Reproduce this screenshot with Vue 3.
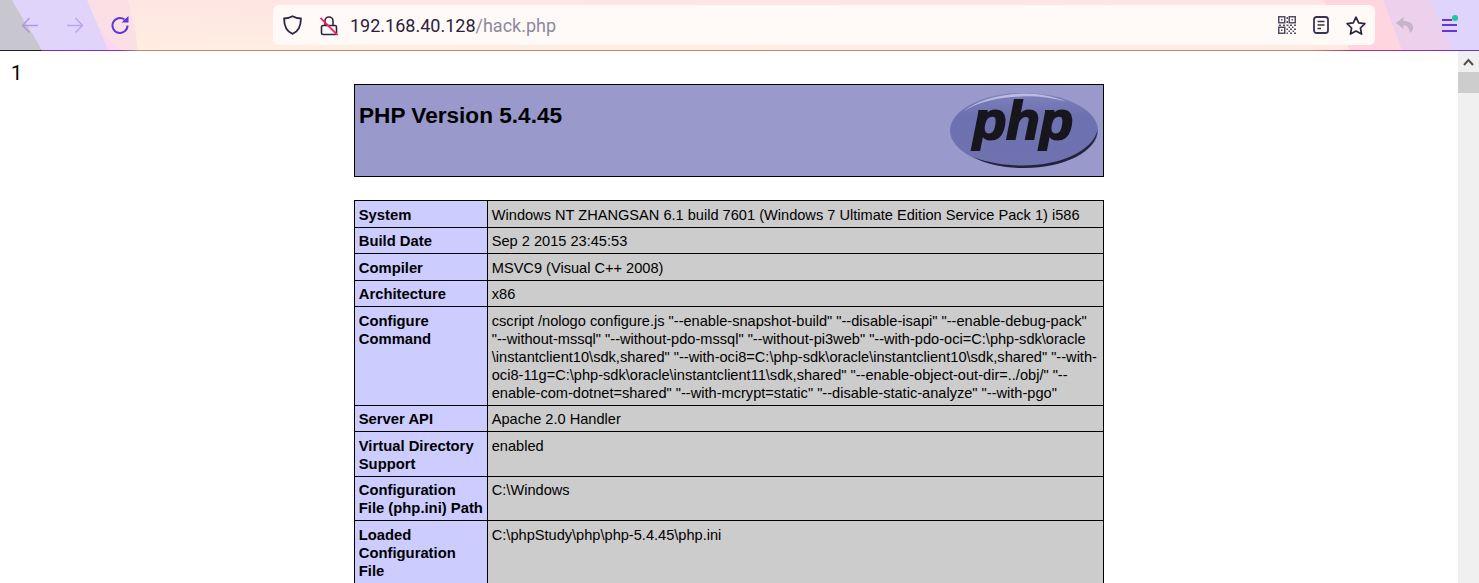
<template>
  <div class="browser">
    <header class="toolbar">
      <svg class="toolbar-bg" width="1479" height="50" viewBox="0 0 1479 50" preserveAspectRatio="none">
        <defs>
          <linearGradient id="barBase" x1="0" y1="1" x2="1" y2="0">
            <stop offset="0" stop-color="#ffefe2" />
            <stop offset="1" stop-color="#ffe6e2" />
          </linearGradient>
          <linearGradient id="barTint" x1="0" y1="0" x2="0" y2="1">
            <stop offset="0" stop-color="#ffdfe6" stop-opacity="0.4" />
            <stop offset="1" stop-color="#ffdfe6" stop-opacity="0" />
          </linearGradient>
        </defs>
        <rect width="1479" height="50" fill="url(#barBase)" />
        <rect x="130" width="1220" height="50" fill="url(#barTint)" />
        <path d="M1323 0H1479V50H1350Z" fill="#ffd6e0" />
        <path d="M0 0H128C132 15 136 32 138 50H0Z" fill="#fadfe4" />
        <path d="M0 0H87C92 15 100 32 120 50H42C32 32 20 15 12 0Z" fill="#fdd6f0" />
        <path d="M0 0H87L108 50H42C32 32 20 15 12 0Z" fill="#e0d4fb" />
        <path d="M0 0H12C20 15 32 32 42 50H0Z" fill="#c8c6ce" />
        <path d="M1383 0H1479V50H1402Z" fill="#ecd0ec" />
        <path d="M1430 0H1479V50H1452Z" fill="#dfd4fb" />
      </svg>
      <div class="nav-buttons">
        <svg class="icon" viewBox="0 0 18 18" fill="none" stroke="#ab9ae2" stroke-width="1.500"><path d="M17 9.500H1.500M8.500 2l-7 7.500 7 7" /></svg>
        <svg class="icon" viewBox="0 0 18 18" fill="none" stroke="#b7a6ea" stroke-width="1.500"><path d="M1 9.500h15.500M9.500 2l7 7.500-7 7" /></svg>
        <svg class="icon" viewBox="0 0 18 18" fill="none" stroke="#5f38d4" stroke-width="2"><path d="M16.500 9.500a7.500 7.500 0 1 1-3-6" /><path d="M10.500 6.500H17.500V0z" fill="#5f38d4" stroke="none" /></svg>
      </div>
      <div class="address-bar">
        <svg class="shield" width="19" height="20" viewBox="0 0 19 20" fill="none" stroke="#2d2640" stroke-width="1.800"><path d="M9.500 1.200c2.800 1.500 5.200 2.100 8.400 2.300 0 7.800-2 12.800-8.400 15.400C3.100 16.300 1.100 11.300 1.100 3.500c3.200-.2 5.600-.8 8.400-2.300z" /></svg>
        <svg class="lock" width="18" height="21" viewBox="0 0 18 21" fill="none" stroke="#2d2640" stroke-width="1.600">
          <path d="M3 10.500h12a1.500 1.500 0 0 1 1.500 1.500v6a1.500 1.500 0 0 1-1.500 1.500H3A1.500 1.500 0 0 1 1.500 18v-6A1.500 1.500 0 0 1 3 10.500z" />
          <path d="M5 10.500V6a4 4 0 0 1 8 0v4.500" />
          <path d="M0.500 3l17 17" stroke="#f0245c" stroke-width="1.800" />
        </svg>
        <span class="url">192.168.40.128<span class="url-path">/hack.php</span></span>
        <div class="address-actions">
          <svg class="qr" width="18" height="18" viewBox="0 0 18 18" fill="#544d6a">
            <path fill-rule="evenodd" d="M0 0h7.500v7.500H0zM1.500 1.500v4.500h4.500v-4.500zM10.500 0h7.500v7.500h-7.500zM12 1.500v4.500h4.500v-4.500zM0 10.500h7.500v7.500H0zM1.500 12v4.500h4.500v-4.500z" />
            <path d="M3 3h1.500v1.500H3zM13.500 3h1.500v1.500h-1.500zM3 13.500h1.500v1.500H3zM8.500 1h1.500v2H8.500zM8.500 5h1.500v2H8.500zM8.500 8.500h2v1.500h-2zM1 8.500h2v1.500H1zM5 8.500h2v1.500H5zM12 8.500h2v1.500h-2zM16 8.500h2v1.500h-2zM10.500 10.500h1.500v1.500h-1.500zM14 10.500h1.500v1.500H14zM8.500 12.500h1.500v1.500H8.500zM12 12.500h2v1.500h-2zM16 12.500h2v1.500h-2zM10.500 14.500h1.500v1.500h-1.500zM14.500 14.500h1.500v1.500h-1.500zM8.500 16.500h1.500v1.500H8.500zM12 16.500h2v1.500h-2zM16 16.500h2v1.500h-2z" />
          </svg>
          <svg class="reader" width="16" height="18" viewBox="0 0 16 18" fill="none" stroke="#3a3350" stroke-width="1.800"><rect x="1" y="1" width="14" height="16" rx="2.500" /><path d="M4.500 5.500h7M4.500 9h7M4.500 12.500h3.500" stroke-width="1.500" /></svg>
          <svg class="star" width="20" height="19" viewBox="0 0 20 19" fill="none" stroke="#2d2640" stroke-width="1.700" stroke-linejoin="round"><path d="M10 1.200l2.700 5.700 6.200.8-4.500 4.300 1.200 6.100-5.600-3-5.600 3 1.200-6.100L1.100 7.700l6.200-.8z" /></svg>
        </div>
      </div>
      <div class="toolbar-end">
        <svg class="undo" width="17" height="16" viewBox="0 0 17 16" fill="#c6b5c9"><path d="M7.500 0L0 6l7.500 6V8.500c3.500 0 5.500 1.500 6.500 7.500 2.500-2 3-3.500 3-5.500C17 6.500 13.500 4 7.500 4z" /></svg>
        <div class="menu-button">
          <span class="menu-line short"></span>
          <span class="menu-line"></span>
          <span class="menu-line"></span>
          <span class="menu-dot"></span>
        </div>
      </div>
    </header>

    <div class="viewport">
      <main class="page">
        <div class="echo">1</div>
        <div class="phpinfo-head">
          <h1>PHP Version 5.4.45</h1>
          <svg class="php-logo" width="150" height="80" viewBox="0 0 150 80">
            <defs>
              <linearGradient id="ovalFill" x1="0" y1="0" x2="0" y2="1">
                <stop offset="0" stop-color="#7e80ba" />
                <stop offset="0.3" stop-color="#6e71b0" />
                <stop offset="1" stop-color="#6f72b0" />
              </linearGradient>
              <filter id="soft" x="-5%" y="-5%" width="110%" height="110%">
                <feGaussianBlur stdDeviation="0.45" />
              </filter>
            </defs>
            <g filter="url(#soft)">
              <ellipse cx="75" cy="38.500" rx="74" ry="37.500" fill="url(#ovalFill)" />
              <path d="M14 20C28 8 50 2 75 1.500c16 0 30 3 42 8C100 5 85 3.500 72 4.500 48 5.500 28 10 14 20z" fill="#b9bbe0" />
              <path d="M148.500 38c0 21-33 38-73.500 38-20 0-38-4-51-11 16 6 32 8.500 50 8.500 38 0 70-15 74.500-35.500z" fill="#23233a" />
              <text class="php-logo-text" x="24" y="47" textLength="100" lengthAdjust="spacingAndGlyphs">php</text>
            </g>
          </svg>
        </div>
        <table class="phpinfo-table">
          <tbody>
            <tr v-for="row in rows" :key="row.label">
              <td class="label">{{ row.label }}</td>
              <td class="value">{{ row.value }}</td>
            </tr>
          </tbody>
        </table>
      </main>
      <div class="scrollbar">
        <div class="scroll-up">
          <svg width="11" height="8" viewBox="0 0 11 8" fill="none" stroke="#505050" stroke-width="2"><path d="M1 7l4.500-5 4.500 5" /></svg>
        </div>
        <div class="scroll-thumb"></div>
      </div>
    </div>
  </div>
</template>

<script setup>
const rows = [
  { label: 'System', value: 'Windows NT ZHANGSAN 6.1 build 7601 (Windows 7 Ultimate Edition Service Pack 1) i586' },
  { label: 'Build Date', value: 'Sep 2 2015 23:45:53' },
  { label: 'Compiler', value: 'MSVC9 (Visual C++ 2008)' },
  { label: 'Architecture', value: 'x86' },
  {
    label: 'Configure\nCommand',
    value: 'cscript /nologo configure.js "--enable-snapshot-build" "--disable-isapi" "--enable-debug-pack"\n"--without-mssql" "--without-pdo-mssql" "--without-pi3web" "--with-pdo-oci=C:\\php-sdk\\oracle\n\\instantclient10\\sdk,shared" "--with-oci8=C:\\php-sdk\\oracle\\instantclient10\\sdk,shared" "--with-\noci8-11g=C:\\php-sdk\\oracle\\instantclient11\\sdk,shared" "--enable-object-out-dir=../obj/" "--\nenable-com-dotnet=shared" "--with-mcrypt=static" "--disable-static-analyze" "--with-pgo"'
  },
  { label: 'Server API', value: 'Apache 2.0 Handler' },
  { label: 'Virtual Directory\nSupport', value: 'enabled' },
  { label: 'Configuration\nFile (php.ini) Path', value: 'C:\\Windows' },
  { label: 'Loaded\nConfiguration\nFile', value: 'C:\\phpStudy\\php\\php-5.4.45\\php.ini' }
]
</script>

<style>
html,
body {
  margin: 0;
  overflow: hidden;
  background: #fff;
}
</style>

<style scoped>
.browser {
  display: flex;
  flex-direction: column;
  height: 583px;
  overflow: hidden;
  font-family: "Liberation Sans", Arial, sans-serif;
}

/* 顶部工具栏 */
.toolbar {
  position: relative;
  flex: none;
  display: flex;
  align-items: center;
  height: 50px;
  border-bottom: 1px solid transparent;
  border-image: linear-gradient(90deg, #222 0, #222 42px, #6f2fc4 43px, #7a35c0 120px, #c58a68 140px, #c58a68 1310px, #c8306e 1350px, #b03099 1400px, #6a35d8 1452px, #6a35d8 100%) 1;
}

.toolbar-bg {
  position: absolute;
  left: 0;
  top: 0;
}

.icon {
  position: relative;
  flex: none;
  width: 18px;
  height: 18px;
}

.nav-buttons {
  position: relative;
  display: flex;
  gap: 27px;
  margin-left: 21px;
  width: 252px;
}

.address-bar {
  position: relative;
  display: flex;
  align-items: center;
  width: 1102px;
  height: 40px;
  border-radius: 6px;
  background: #fffaf7;
}

.shield {
  flex: none;
  margin-left: 10px;
}

.lock {
  flex: none;
  margin-left: 18px;
}

.url {
  margin-left: 12px;
  font-family: Roboto, "Noto Sans", sans-serif;
  font-size: 18px;
  color: #2a2040;
}

.url-path {
  color: #8f88a0;
}

.address-actions {
  display: flex;
  align-items: center;
  gap: 17px;
  margin-left: auto;
  margin-right: 9px;
}

.toolbar-end {
  position: relative;
  display: flex;
  align-items: center;
  margin-left: 21px;
  gap: 29px;
}

.menu-button {
  position: relative;
  display: flex;
  flex-direction: column;
  gap: 3.500px;
  width: 15px;
}

.menu-line {
  width: 15px;
  height: 2px;
  background: #6a35d8;
}

.menu-line.short {
  width: 10px;
}

.menu-dot {
  position: absolute;
  top: -4px;
  right: -1px;
  width: 6px;
  height: 6px;
  border-radius: 50%;
  background: #1cc8a0;
}

/* 页面区域 */
.viewport {
  flex: 1;
  display: flex;
  min-height: 0;
}

.page {
  flex: 1;
  min-width: 0;
  overflow: hidden;
  padding-top: 11px;
  color: #000;
}

.echo {
  height: 22px;
  padding-left: 11px;
  font-family: Roboto, "Liberation Sans", sans-serif;
  font-size: 20px;
  line-height: 23px;
}

.phpinfo-head {
  box-sizing: border-box;
  display: flex;
  justify-content: space-between;
  width: 750px;
  height: 93px;
  margin: 0 auto 23px;
  padding: 4px 4px 0;
  border: 1px solid #000;
  background: #9999cc;
}

.phpinfo-head h1 {
  margin: 13px 0 0;
  font-size: 22.600px;
  line-height: 28px;
  font-weight: bold;
}

.php-logo {
  flex: none;
  margin-top: 3px;
}

.php-logo-text {
  font-family: "Liberation Sans", Arial, sans-serif;
  font-size: 54px;
  font-weight: bold;
  font-style: italic;
  fill: #14141c;
  stroke: #14141c;
  stroke-width: 2px;
}

.phpinfo-table {
  width: 750px;
  margin: 0 auto;
  table-layout: fixed;
  border-collapse: collapse;
  font-size: 14.600px;
  line-height: 18px;
}

.phpinfo-table td {
  padding: 4.750px 3.750px 2.750px;
  border: 1px solid #000;
  vertical-align: baseline;
  white-space: pre;
}

.label {
  width: 124px;
  background: #ccccff;
  font-size: 14.800px;
  font-weight: bold;
}

.phpinfo-table td.value {
  padding-left: 4.250px;
  background: #cccccc;
}

.scrollbar {
  flex: none;
  width: 21px;
  background: #f0f0f0;
}

.scroll-up {
  display: flex;
  align-items: center;
  justify-content: center;
  height: 21px;
}

.scroll-thumb {
  height: 21px;
  background: #cdcdcd;
}
</style>
